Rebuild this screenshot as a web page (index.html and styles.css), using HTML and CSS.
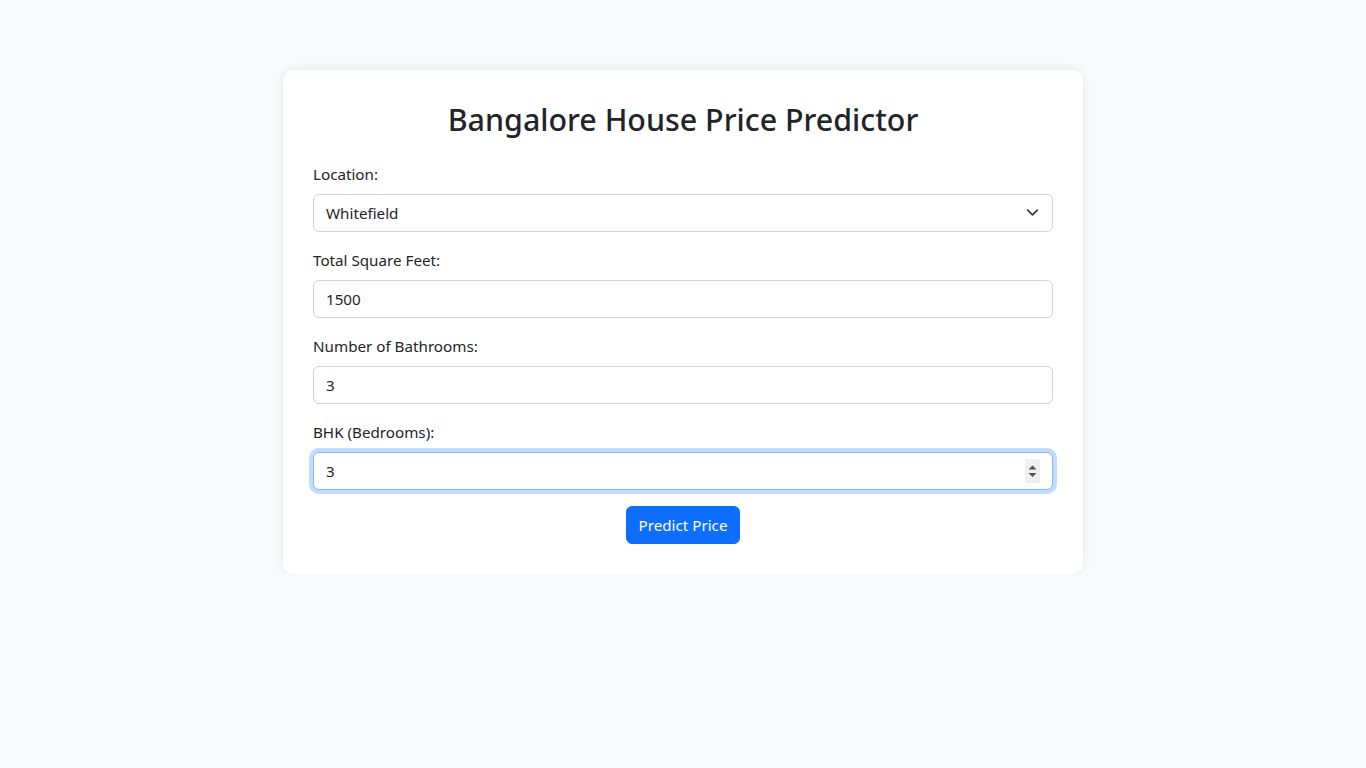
FILE: index.html
```html
<!DOCTYPE html>
<html lang="en">
<head>
<meta charset="utf-8">
<title>Bangalore House Price Predictor</title>
<link rel="stylesheet" href="styles.css">
</head>
<body>
<main class="page">
  <form class="card">
    <h2 class="title">Bangalore House Price Predictor</h2>
    <div class="group">
      <label class="label" for="loc">Location:</label>
      <div class="select-wrap">
        <select id="loc" class="control select">
          <option>Whitefield</option>
        </select>
        <svg class="chevron" width="16" height="16" viewBox="0 0 16 16"><path d="M2 5l6 6 6-6" fill="none" stroke="#343a40" stroke-width="2" stroke-linecap="round" stroke-linejoin="round"/></svg>
      </div>
    </div>
    <div class="group">
      <label class="label" for="sqft">Total Square Feet:</label>
      <input id="sqft" class="control" type="text" value="1500">
    </div>
    <div class="group">
      <label class="label" for="bath">Number of Bathrooms:</label>
      <input id="bath" class="control" type="text" value="3">
    </div>
    <div class="group">
      <label class="label" for="bhk">BHK (Bedrooms):</label>
      <div class="select-wrap">
        <input id="bhk" class="control focused" type="text" value="3">
        <span class="spinner">
          <svg width="15" height="24" viewBox="0 0 15 24"><path d="M3.5 10.5L7.5 6.5 11.5 10.5Z" fill="#505050"/><path d="M3.5 14L7.5 18 11.5 14Z" fill="#505050"/></svg>
        </span>
      </div>
    </div>
    <div class="actions">
      <button type="button" class="btn">Predict Price</button>
    </div>
  </form>
</main>
</body>
</html>
```
FILE: styles.css
```css
* { box-sizing: border-box; }
html, body { margin: 0; padding: 0; }
body {
  background: #f8f9fa;
  color: #212529;
  font-family: "Noto Sans", "Open Sans", sans-serif;
  font-size: 15.2px;
  line-height: 24px;
}
.page {
  display: flex;
  justify-content: center;
  padding-top: 70px;
}
.card {
  width: 800px;
  background: #fff;
  border-radius: 10px;
  box-shadow: 0 0 10px rgba(0,0,0,0.08);
  padding: 30px;
  margin: 0;
}
.title {
  font-size: 30.4px;
  font-weight: 500;
  line-height: 40px;
  height: 38.4px;
  text-align: center;
  margin: 0 0 24px;
}
.group { margin-bottom: 16px; }
.label {
  display: block;
  margin-bottom: 8px;
}
.select-wrap { position: relative; }
.control {
  display: block;
  width: 100%;
  height: 38px;
  padding: 6px 12px;
  font: inherit;
  color: #212529;
  background: #fff;
  border: 1px solid #ced4da;
  border-radius: 6px;
  outline: none;
  -webkit-appearance: none;
  appearance: none;
}
.select { padding-right: 36px; }
.chevron {
  position: absolute;
  right: 14px;
  top: 12px;
  pointer-events: none;
  width: 13px;
  height: 13px;
}
.focused {
  border-color: #86b7fe;
  box-shadow: 0 0 0 4px rgba(13,110,253,0.25);
}
.spinner {
  position: absolute;
  right: 13px;
  top: 7px;
  width: 15px;
  height: 24px;
  background: #efefef;
  display: flex;
}
.actions {
  display: flex;
  justify-content: center;
}
.btn {
  font: inherit;
  color: #fff;
  background: #0d6efd;
  border: 1px solid #0d6efd;
  border-radius: 6px;
  padding: 6px 12px;
  height: 38px;
  cursor: pointer;
}
```
